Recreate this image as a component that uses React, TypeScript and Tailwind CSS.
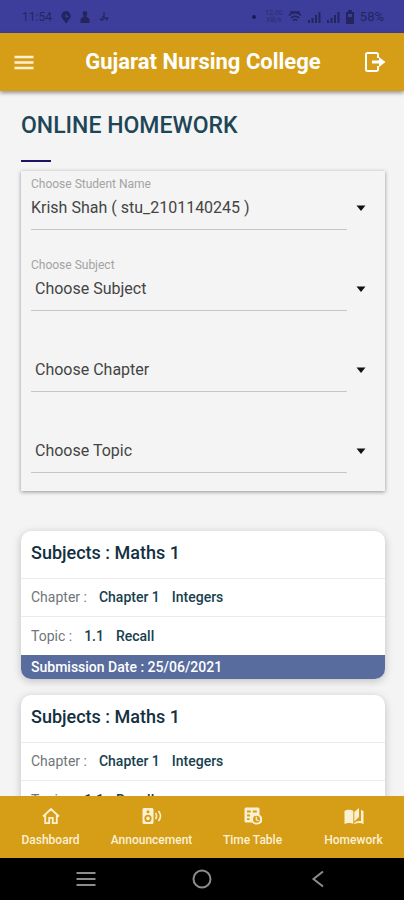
import type { ReactNode } from 'react';

interface Field {
  id: string;
  label?: string;
  value: string;
  chosen?: boolean;
}

const FIELDS: Field[] = [
  { id: 'student', label: 'Choose Student Name', value: 'Krish Shah ( stu_2101140245 )', chosen: true },
  { id: 'subject', label: 'Choose Subject', value: 'Choose Subject' },
  { id: 'chapter', value: 'Choose Chapter' },
  { id: 'topic', value: 'Choose Topic' },
];

const HOMEWORK = [
  { id: 1, subject: 'Maths 1', chapter: 'Chapter 1', chapterName: 'Integers', topic: '1.1', topicName: 'Recall', due: '25/06/2021' },
  { id: 2, subject: 'Maths 1', chapter: 'Chapter 1', chapterName: 'Integers', topic: '1.1', topicName: 'Recall', due: '25/06/2021' },
];

function Signal() {
  return (
    <svg className="h-3 w-3.5" viewBox="0 0 14 12" fill="currentColor">
      <path d="M1 9h2v3H1zM4.5 7h2v5h-2zM8 4h2v8H8zM11.5 1h2v11h-2z" />
    </svg>
  );
}

function StatusBar() {
  return (
    <div className="flex h-[33px] shrink-0 items-center justify-between bg-[#3d3e9b] pr-5 pl-[22px] text-[12px] text-[#24255f]">
      <div className="flex items-center gap-[9px]">
        <span>11:54</span>
        <svg className="h-3 w-2.5" viewBox="0 0 10 12" fill="currentColor">
          <path fillRule="evenodd" d="M5 0a4.7 4.7 0 0 1 4.7 4.7C9.7 8 7 9 5.8 12H4.2C4 9 .3 8 .3 4.7A4.7 4.7 0 0 1 5 0zM4.5 3.5v2.8h3V5H6V3.5z" />
        </svg>
        <svg className="h-3 w-2.5" viewBox="0 0 10 12" fill="currentColor">
          <path d="M5 0a2.3 2.3 0 0 1 2 3.5L6.3 5.5 9.5 8v4H.5V8l3.2-2.500L3 3.500A2.300 2.300 0 0 1 5 0z" />
        </svg>
        <svg className="h-2.5 w-2.5" viewBox="0 0 10 10" fill="none" stroke="currentColor" strokeWidth="1.3">
          <path d="M5 0v4L3 6M1 6.5C2 9 4 8 5 6.5s2-1 3 2M8.5 5v2" />
        </svg>
      </div>
      <div className="flex items-center gap-[5px]">
        <span className="mr-1 size-1 rounded-full bg-[#191a55]" />
        <span className="text-center text-[7px] leading-[7px] opacity-70">12.00<br />KB/s</span>
        <svg className="h-3 w-3.5" viewBox="0 0 14 12" fill="none" stroke="currentColor" strokeWidth="1.5">
          <path d="M1 4.5C4 .8 10 .8 13 4.5M3 7c2-2.500 6-2.500 8 0M5 9.500c1-1.300 3-1.300 4 0M2 1h10" />
        </svg>
        <Signal />
        <Signal />
        <svg className="h-3.5 w-2.5" viewBox="0 0 10 14" fill="currentColor">
          <path fillRule="evenodd" d="M3 0h4v2h2v12H1V2h2zM3 4v3h4V4z" />
        </svg>
        <span className="text-[13px]">58%</span>
      </div>
    </div>
  );
}

function Header() {
  return (
    <header className="relative z-10 flex h-[58px] shrink-0 items-center justify-between bg-[#d59e16] pr-[18px] pl-3 text-white shadow-[0_2px_4px_rgba(0,0,0,0.4)]">
      <button type="button" aria-label="Menu" className="pr-1.5 text-[#fbf0d4]">
        <svg className="size-6" viewBox="0 0 24 24" fill="none" stroke="currentColor" strokeWidth="2.5">
          <path d="M2.500 7h19M2.500 12.500h19M2.500 18h19" />
        </svg>
      </button>
      <h1 className="text-[22px] leading-7 font-bold">Gujarat Nursing College</h1>
      <button type="button" aria-label="Log out">
        <svg className="size-[22px]" viewBox="0 0 22 22" fill="none">
          <path d="M14 7V3.500A1.500 1.500 0 0 0 12.500 2h-9A1.500 1.500 0 0 0 2 3.500v15A1.500 1.500 0 0 0 3.500 20h9a1.500 1.500 0 0 0 1.500-1.500V15" stroke="currentColor" strokeWidth="2" />
          <path d="M8 9.500h7V6l6.500 5-6.500 5v-3.500H8z" fill="currentColor" />
        </svg>
      </button>
    </header>
  );
}

function SelectField({ id, label, value, chosen }: Field) {
  return (
    <div>
      {label ? (
        <label htmlFor={id} className="block h-4 text-[12px] leading-4 text-[#a3a3a3]">{label}</label>
      ) : (
        <div className="h-4" />
      )}
      <div className="flex items-center">
        <select
          id={id}
          aria-label={label ? undefined : value}
          className={`h-[38px] min-w-0 flex-1 appearance-none border-b border-[#c6c6c6] bg-transparent pb-1.5 text-[16px] text-[#444] outline-none ${chosen ? 'pl-0' : 'pl-1'}`}
        >
          <option>{value}</option>
        </select>
        <svg className="mx-2 mb-1.5 size-3 shrink-0" viewBox="0 0 12 12" fill="#111">
          <path d="M1.500 3.500h9L6 9z" />
        </svg>
      </div>
    </div>
  );
}

function HomeworkCard({ item }: { item: (typeof HOMEWORK)[number] }) {
  return (
    <article className="overflow-hidden rounded-[10px] bg-white text-[14px] text-[#17404f] shadow-[0_2px_8px_rgba(0,0,0,0.22)]">
      <h3 className="flex h-12 items-center border-b border-[#ebebeb] px-2.5 pb-1 text-[18px] font-medium text-[#12303f]">
        Subjects : {item.subject}
      </h3>
      <p className="flex h-[38px] items-center gap-3 border-b border-[#ebebeb] px-2.5 font-medium">
        <span className="font-normal text-[#6f7679]">Chapter :</span>
        <span>{item.chapter}</span>
        <span>{item.chapterName}</span>
      </p>
      <p className="flex h-[38px] items-center gap-3 px-2.5 font-medium">
        <span className="font-normal text-[#6f7679]">Topic :</span>
        <span>{item.topic}</span>
        <span>{item.topicName}</span>
      </p>
      <p className="h-6 bg-[#586c9d] px-2.5 leading-6 font-medium text-white">Submission Date : {item.due}</p>
    </article>
  );
}

function TabLink({ label, children }: { label: string; children: ReactNode }) {
  return (
    <a href="#" className="flex flex-1 flex-col items-center gap-1.5 pt-2.5 text-[12px] leading-4 font-medium">
      {children}
      <span>{label}</span>
    </a>
  );
}

function TabBar() {
  return (
    <nav className="flex h-[62px] shrink-0 bg-[#d59e16] text-[#fbf0d4]">
      <TabLink label="Dashboard">
        <svg className="size-5" viewBox="0 0 20 20" fill="none" stroke="currentColor" strokeWidth="1.8">
          <path d="M2 10.500L10 3l8 7.500M4.200 9v8.100h4v-5.300h3.600v5.300h4V9" />
        </svg>
      </TabLink>
      <TabLink label="Announcement">
        <svg className="size-5" viewBox="0 0 20 20" fill="none">
          <path fillRule="evenodd" fill="currentColor" d="M2 2h8a1.500 1.500 0 0 1 1.500 1.500v13A1.500 1.500 0 0 1 10 18H2a1.500 1.500 0 0 1-1.500-1.500v-13A1.500 1.500 0 0 1 2 2zm4 2.200a1.500 1.500 0 1 0 0 3 1.500 1.500 0 0 0 0-3zM6 8.800a3.600 3.600 0 1 0 0 7.200 3.600 3.600 0 0 0 0-7.200z" />
          <circle cx="6" cy="12.400" r="1.800" fill="currentColor" />
          <path d="M13.500 7c1.400 2 1.400 4 0 6M16.500 5c2.400 3 2.400 7 0 10" stroke="currentColor" strokeWidth="1.600" />
        </svg>
      </TabLink>
      <TabLink label="Time Table">
        <svg className="size-5" viewBox="0 0 20 20" fill="none">
          <path fillRule="evenodd" fill="currentColor" d="M3 1.500h12A1.500 1.500 0 0 1 16.500 3v6H19v9h-8l-1-1.500H3A1.500 1.500 0 0 1 1.500 15V3A1.500 1.500 0 0 1 3 1.500zM4 4.500v2h3.800v-2zm5.800 0v2h4v-2zM4 8.600v1.800h3V8.600zM4 12.300v1.800h2.600v-1.800zM16.700 9L19 11V9zM19 16l-2.300 2H19z" />
          <circle cx="13.500" cy="13.300" r="5.300" fill="currentColor" />
          <circle cx="13.500" cy="13.300" r="3.500" fill="#d59e16" />
          <path d="M13.300 10.800v2.900l2.200 1.200" stroke="currentColor" strokeWidth="1.300" />
        </svg>
      </TabLink>
      <TabLink label="Homework">
        <svg className="size-5" viewBox="0 0 20 20" fill="currentColor">
          <path d="M.5 5C3 3.200 7 3.200 9.300 5v13C7 16.600 3 16.600.5 18z" />
          <path d="M10.300 6l4.700-4v9l-4.700 4.500z" />
          <path d="M17 4c1 .2 1.800.5 2.500 1v13c-2.800-1.400-6.200-1.400-9.200 0v-1l1.500-1.300c1.700-.6 3.400-.7 5.200-.5z" />
        </svg>
      </TabLink>
    </nav>
  );
}

function SystemBar() {
  return (
    <div className="flex h-[42px] shrink-0 items-center justify-center gap-24 bg-black text-[#8c8c8c]">
      <button type="button" aria-label="Recent apps">
        <svg className="size-5" viewBox="0 0 20 20" stroke="currentColor" strokeWidth="2">
          <path d="M.5 4h19M.5 10h19M.5 16h19" />
        </svg>
      </button>
      <button type="button" aria-label="Home">
        <svg className="size-5" viewBox="0 0 20 20" fill="none" stroke="currentColor" strokeWidth="2">
          <circle cx="10" cy="10" r="8.500" />
        </svg>
      </button>
      <button type="button" aria-label="Back">
        <svg className="size-5" viewBox="0 0 20 20" fill="none" stroke="currentColor" strokeWidth="2">
          <path d="M15 2.500L5.500 10l9.500 7.500" />
        </svg>
      </button>
    </div>
  );
}

export default function App() {
  return (
    <div className="flex h-screen flex-col bg-[#f4f4f4] font-['Roboto',sans-serif]">
      <StatusBar />
      <Header />
      <main className="min-h-0 flex-1 overflow-y-auto pt-[21px] pr-[19px] pl-[21px] [scrollbar-width:none]">
        <h2 className="text-[23px] leading-7 font-medium text-[#1d4657]">ONLINE HOMEWORK</h2>
        {/* short rule under the page title */}
        <div className="mt-5 h-0.5 w-[30px] bg-[#1c1464]" />
        <form className="mt-[9px] flex flex-col gap-[27px] px-2.5 pt-[5px] pb-[18px] shadow-[0_1px_4px_rgba(0,0,0,0.4)]">
          {FIELDS.map(f => <SelectField key={f.id} {...f} />)}
        </form>
        <section className="mt-10 flex flex-col gap-4">
          {HOMEWORK.map(item => <HomeworkCard key={item.id} item={item} />)}
        </section>
      </main>
      <TabBar />
      <SystemBar />
    </div>
  );
}
